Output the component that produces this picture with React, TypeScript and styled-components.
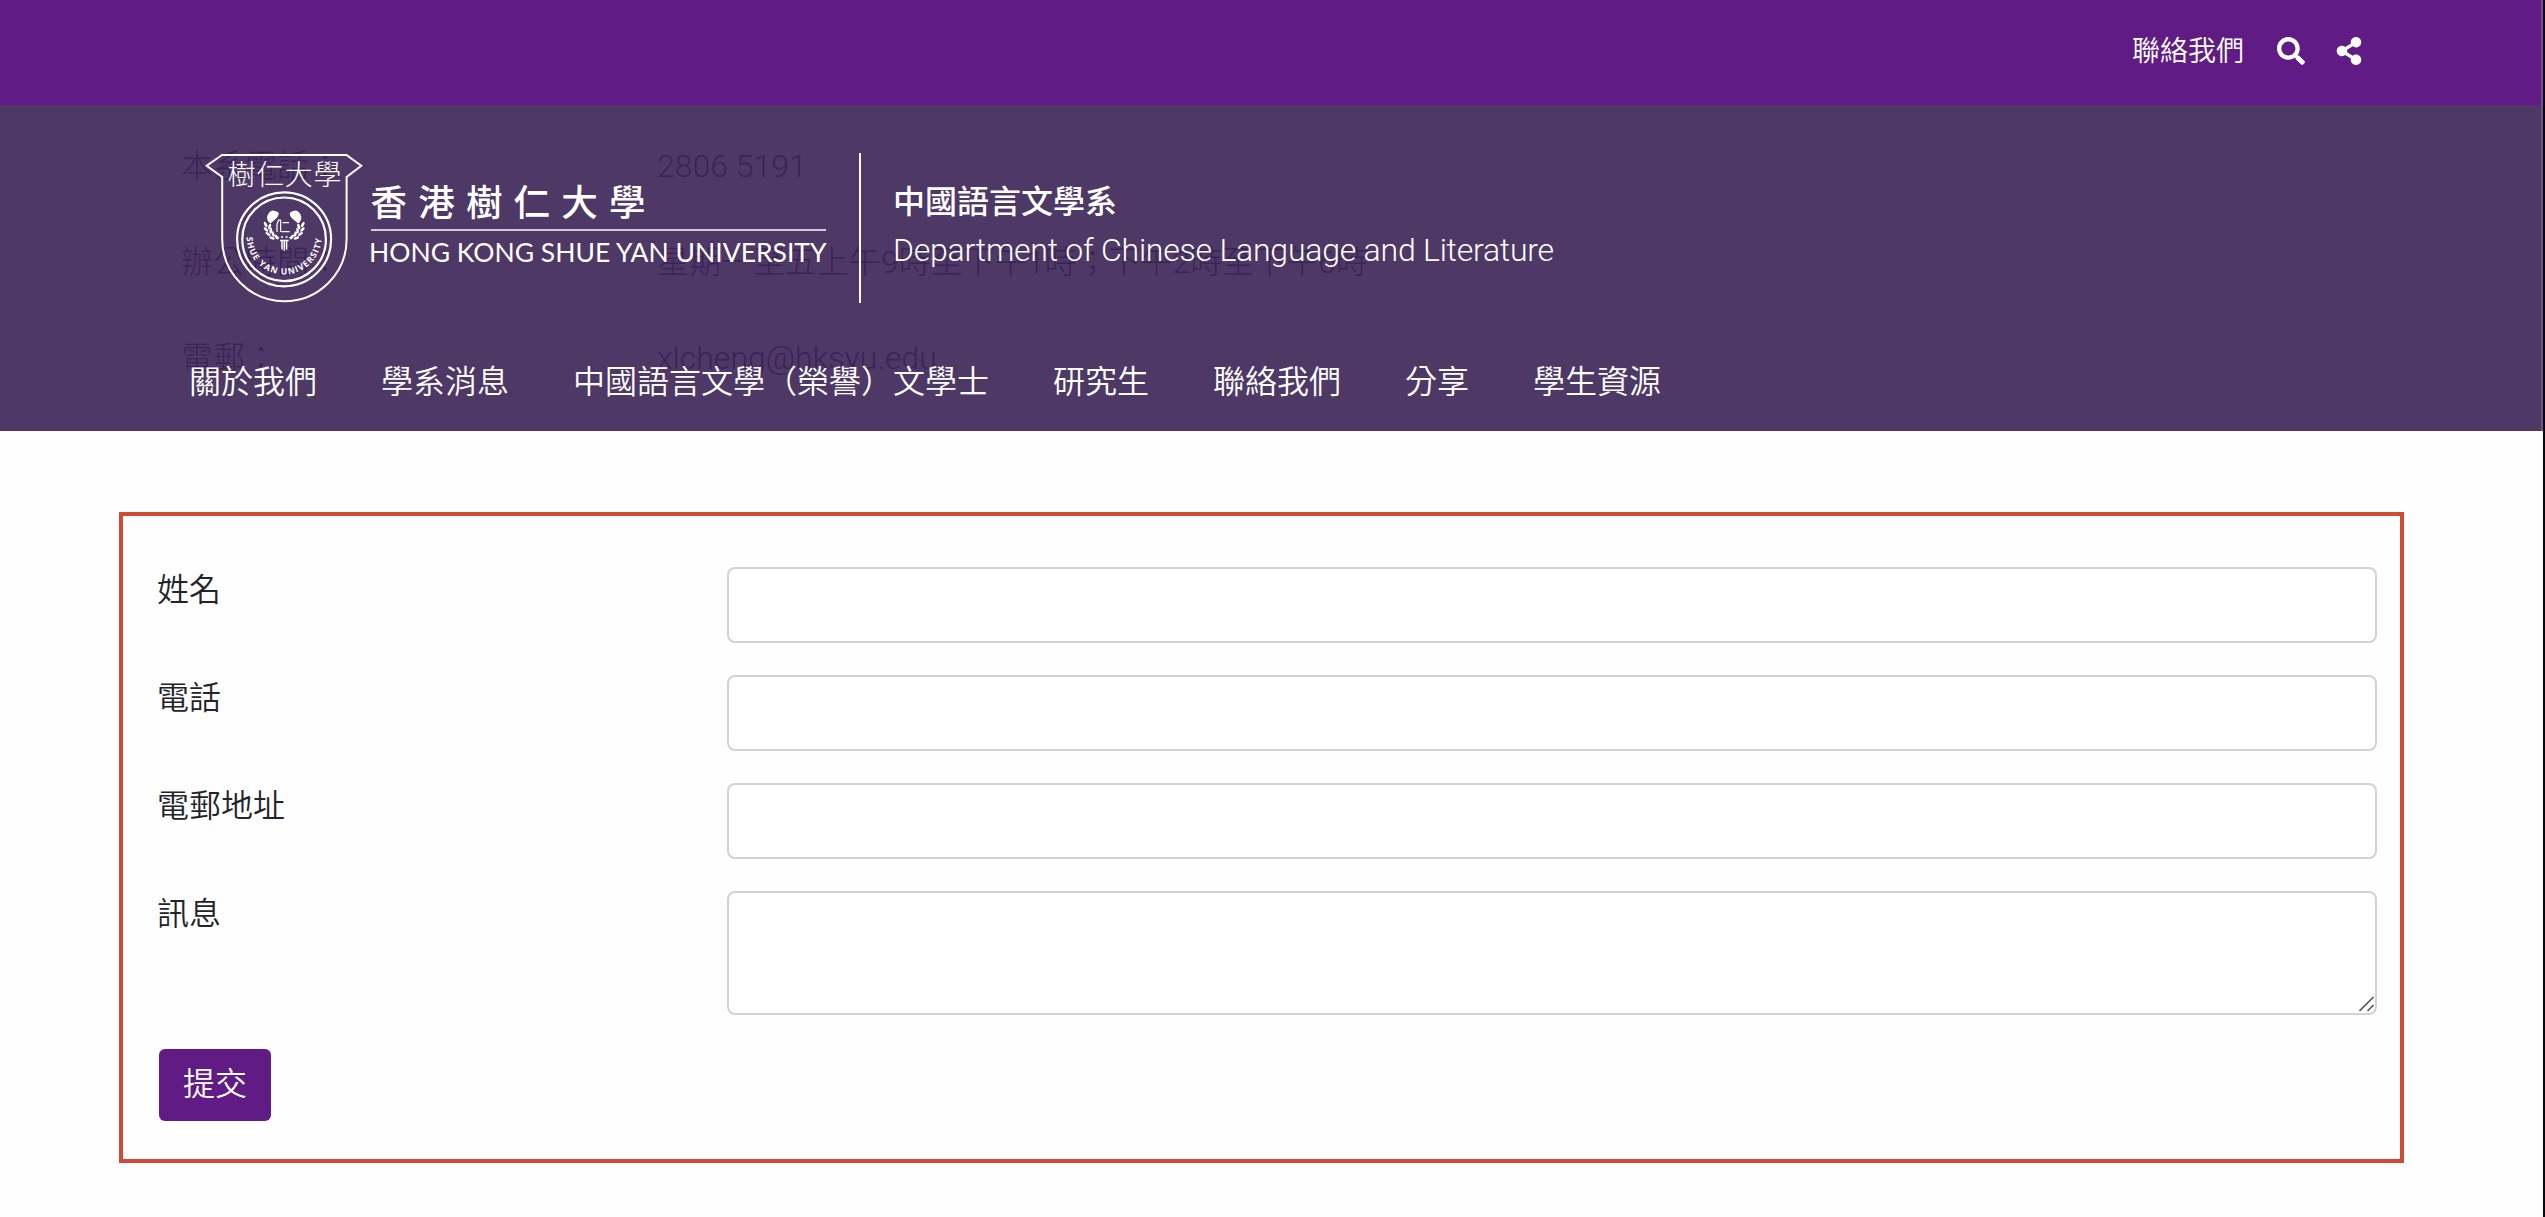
import React from "react";
import styled, { createGlobalStyle } from "styled-components";
import { FaSearch, FaShareAlt } from "react-icons/fa";

const sans = `Roboto, "Noto Sans CJK TC", sans-serif`;

const GlobalStyle = createGlobalStyle`
  *, *::before, *::after { box-sizing: border-box; }
  html, body { margin: 0; background: #fefefe; overflow: hidden; }
  body { font-family: ${sans}; font-weight: 300; font-size: 32px; line-height: 48px; color: #212529; }
`;

const Page = styled.div`
  position: relative;
  height: 1217px;
  background: #fefefe;
  border-right: 2px solid #05070f;
  overflow: hidden;
`;

const Header = styled.header`
  position: absolute;
  inset: 0 0 auto 0;
  height: 431px;
  display: flex;
  flex-direction: column;
  color: #fff;
`;

const TopBar = styled.div`
  height: 105px;
  padding: 0 178px 4px 0;
  display: flex;
  align-items: center;
  justify-content: flex-end;
  background: #601b85;
  border-right: 2px solid #7b4a9a;
  font-size: 28px;
  font-weight: 350;
`;

const TopLink = styled.a`
  margin-right: 33px;
  padding-top: 2px;
`;

const TopIcon = styled.span<{ $gap?: number }>`
  display: flex;
  margin-left: ${(p) => p.$gap ?? 0}px;
`;

const MainBar = styled.div`
  flex: 1;
  padding: 45px 0 0 189px;
  background: rgba(63, 39, 89, 0.92);
  border-right: 2px solid rgba(110, 88, 132, 0.9);
`;

const Brand = styled.div`
  display: flex;
  align-items: center;
  height: 156px;
`;

const Logo = styled.svg`
  display: block;
  width: 625px;
  height: 156px;
  margin-left: 16px;
  overflow: visible;
`;

const Department = styled.div`
  height: 150px;
  margin-left: 29px;
  padding: 25px 0 0 32px;
  border-left: 2px solid #fff;
`;

const DeptZh = styled.div`
  font-weight: 500;
`;

const DeptEn = styled.div`
  white-space: nowrap;
  letter-spacing: -0.23px;
`;

const Nav = styled.nav`
  display: flex;
  gap: 64px;
  margin-top: 52px;
  font-weight: 350;
`;

const NavLink = styled.a`
  white-space: nowrap;
`;

const Details = styled.dl`
  display: grid;
  grid-template-columns: 476px 1fr;
  grid-auto-rows: 96px;
  margin: 0;
  padding: 142px 0 0 181px;
  height: 512px;
  color: #08003c;
`;

const Term = styled.dt`
  margin: 0;
`;

const Value = styled.dd`
  margin: 0;
  white-space: nowrap;
`;

const Form = styled.form`
  width: 2285px;
  height: 651px;
  margin-left: 119px;
  padding: 51px 23px 0 36px;
  border: 4px solid #d14a36;
  display: flex;
  flex-direction: column;
  align-items: flex-start;
  gap: 32px;
`;

const Row = styled.div`
  align-self: stretch;
  display: grid;
  grid-template-columns: 568px 1fr;
`;

const Label = styled.label`
  margin-top: -1px;
  margin-left: -2px;
  font-weight: 350;
`;

const Input = styled.input`
  display: block;
  width: 100%;
  height: 76px;
  border: 2px solid #d0d2d5;
  border-radius: 8px;
  background: #fff;
`;

const TextArea = styled.textarea`
  display: block;
  width: 100%;
  height: 124px;
  border: 2px solid #d0d2d5;
  border-radius: 8px;
  background: #fff;
  resize: none;
`;

const AreaWrap = styled.div`
  position: relative;
`;

const Grip = styled.svg`
  position: absolute;
  right: 2px;
  bottom: 3px;
`;

const Submit = styled.button`
  width: 112px;
  height: 72px;
  padding: 0 0 2px;
  margin-top: 2px;
  border: 0;
  border-radius: 6px;
  background: #601b85;
  color: #fff;
  font: 350 32px/48px ${sans};
`;

const leaves = [
  [265.6, 224.5, 60], [266, 229.5, 45], [268, 234, 35], [272, 238, 20],
  [269.6, 226.5, 110], [270.8, 230.5, 95], [273, 234, 75], [276.4, 237, 55],
];

function University() {
  return (
    <Logo viewBox="205 150 625 156" fill="none" stroke="#fff">
      <path
        strokeWidth="2"
        d="M222 155H346.5L361.3 165.7L346.6 177V239A62.2 62.2 0 0 1 222.2 239V177L206.7 165.7Z"
      />
      <circle cx="284.1" cy="239.3" r="47" strokeWidth="2.2" />
      <circle cx="284.1" cy="239.3" r="41.8" strokeWidth="2.2" />
      <path id="ring" d="M246.6 237A37.5 37.5 0 0 0 321.6 237" stroke="none" />
      <g fill="#fff" stroke="none">
        <text x="227.5" y="184.5" fontFamily="'Noto Sans CJK TC', sans-serif" fontWeight="300" fontSize="28" textLength="114">
          樹仁大學
        </text>
        <text fontFamily="'Open Sans', sans-serif" fontWeight="700" fontSize="8.6">
          <textPath href="#ring" textLength="116">SHUE YAN UNIVERSITY</textPath>
        </text>
        {[1, -1].map((s) => (
          <g key={s} transform={s === 1 ? undefined : "translate(568.4 0) scale(-1 1)"}>
            <path d="M267.2 216.5Q268.6 211.3 272.5 210.4Q276.9 210.5 278.8 213Q278.5 216.4 276.7 218L270.3 223.6Q266.4 220.5 267.2 216.5Z" />
            {leaves.map(([x, y, a], i) => (
              <ellipse key={i} cx={x} cy={y} rx="2.9" ry="1.35" transform={`rotate(${a} ${x} ${y})`} />
            ))}
          </g>
        ))}
      </g>
      <path strokeWidth="1.2" d="M277 232V224L278.6 220.2H280.6V232M282.5 222.6H289M281.5 231.6H289.6" />
      <path strokeWidth="1.5" d="M276 236.4L279 238.2M281 237H283M285.6 237H287.6M292.4 236.4L289.4 238.2M280 240.4H288.6M282 241V249.5M284.3 241V250.5M286.6 241V249.5" />
      <g fill="#fff" stroke="none">
        <text x="370.5" y="216" fontFamily="'Noto Sans CJK TC', sans-serif" fontWeight="500" fontSize="36.5" letterSpacing="11.2">
          香港樹仁大學
        </text>
        <text x="369" y="261.5" fontFamily="Lato, sans-serif" fontWeight="400" fontSize="27.5" textLength="457.5" lengthAdjust="spacingAndGlyphs">
          HONG KONG SHUE YAN UNIVERSITY
        </text>
      </g>
      <path strokeWidth="1.6" d="M371 230H826" />
    </Logo>
  );
}

const navItems = ["關於我們", "學系消息", "中國語言文學（榮譽）文學士", "研究生", "聯絡我們", "分享", "學生資源"];
const details = [
  ["本系電話：", "2806 5191"],
  ["辦公時間：", "星期一至五上午9時至下午1時；下午2時至下午6時"],
  ["電郵：", "xlcheng@hksyu.edu"],
];
const fields = ["姓名", "電話", "電郵地址"];

export default function App() {
  return (
    <Page>
      <GlobalStyle />
      <Details>
        {details.map(([term, value]) => (
          <React.Fragment key={term}>
            <Term>{term}</Term>
            <Value>{value}</Value>
          </React.Fragment>
        ))}
      </Details>
      <Form>
        {fields.map((f) => (
          <Row key={f}>
            <Label>{f}</Label>
            <Input aria-label={f} />
          </Row>
        ))}
        <Row>
          <Label>訊息</Label>
          <AreaWrap>
            <TextArea aria-label="訊息" />
            <Grip width="16" height="16" viewBox="0 0 16 16" stroke="#555" strokeWidth="1.6">
              <path d="M0.5 15L14.5 1M8.5 15L14.5 9" />
            </Grip>
          </AreaWrap>
        </Row>
        <Submit type="button">提交</Submit>
      </Form>
      <Header>
        <TopBar>
          <TopLink>聯絡我們</TopLink>
          <TopIcon><FaSearch size={28} /></TopIcon>
          <TopIcon $gap={30}><FaShareAlt size={28} /></TopIcon>
        </TopBar>
        <MainBar>
          <Brand>
            <University />
            <Department>
              <DeptZh>中國語言文學系</DeptZh>
              <DeptEn>Department of Chinese Language and Literature</DeptEn>
            </Department>
          </Brand>
          <Nav>
            {navItems.map((n) => (
              <NavLink key={n}>{n}</NavLink>
            ))}
          </Nav>
        </MainBar>
      </Header>
    </Page>
  );
}
